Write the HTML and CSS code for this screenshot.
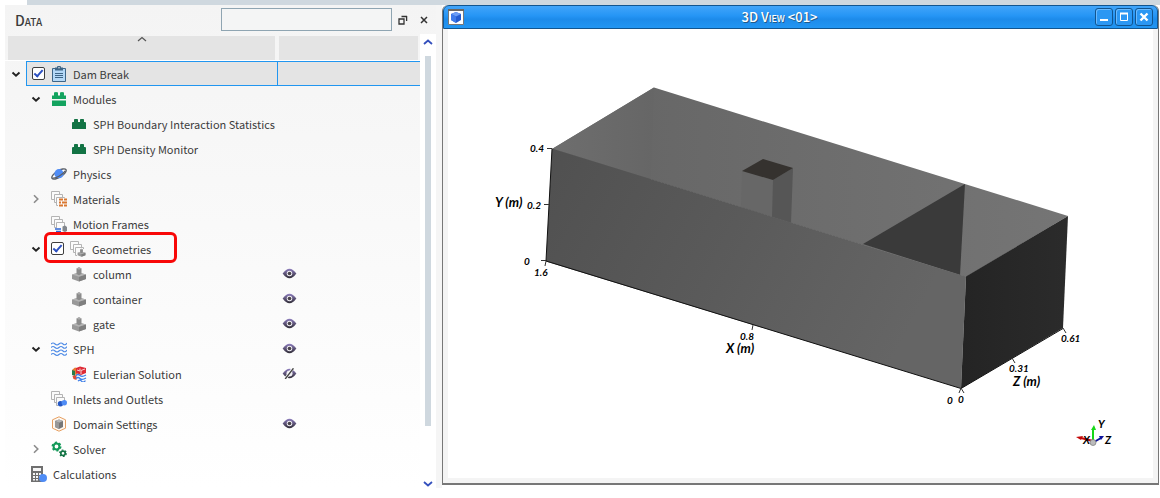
FILE: index.html
```html
<!DOCTYPE html>
<html lang="en">
<head>
<meta charset="utf-8">
<meta name="viewport" content="width=device-width, initial-scale=1">
<title>3D View</title>
<link rel="stylesheet" href="styles.css">
</head>
<body>
<svg class="defs" aria-hidden="true">
  <defs>
    <linearGradient id="eye-fill" x1="0" y1="0" x2="0" y2="1"><stop offset="0" stop-color="#8f7fc0"/><stop offset="1" stop-color="#2e2b33"/></linearGradient>
    <symbol id="down" viewBox="0 0 10 10"><path d="M1.500 3.500 5 6.700l3.500-3.200" fill="none" stroke="#222" stroke-width="1.900"/></symbol>
    <symbol id="right" viewBox="0 0 10 10"><path d="M3 1.200 6.800 5 3 8.800" fill="none" stroke="#8b8b8b" stroke-width="1.600"/></symbol>
    <symbol id="clipboard" viewBox="0 0 16 16"><path d="M1.500 2.500h13v13h-13z" fill="#b4d8f7" stroke="#3d6587"/><path d="M4 1.500h2a2 1.800 0 0 1 4 0h2V4.500H4z" fill="#3d6587"/><circle cx="8" cy="1.800" r=".8" fill="#e4e4e4"/><path d="M4 7.500h8M4 9.500h8M4 11.500h8" stroke="#3d6587"/></symbol>
    <symbol id="module" viewBox="0 0 16 16"><path d="M1 8V4.500h2V1.500q2-1 4 0v3h2v-3q2-1 4 0v3h2V8z" fill="#13a35f"/><path d="M1 9.500h14V15H1z" fill="#13a35f"/></symbol>
    <symbol id="brick" viewBox="0 0 16 16"><path d="M1 13V7q0-1 1-1h1V3.500Q3 3 4 3h2q1 0 1 .5V6h2V3.500Q9 3 10 3h2q1 0 1 .5V6h1q1 0 1 1v6z" fill="#127344"/></symbol>
    <symbol id="planet" viewBox="0 0 16 16"><ellipse cx="8" cy="8" rx="8.200" ry="3.200" transform="rotate(-32 8 8)" fill="#fff" stroke="#5a5f68" stroke-width="1.400"/><circle cx="8" cy="7.700" r="4.600" fill="#4f8cf5"/><path d="M1.500 12c3 .8 10-3 12.700-7.200" fill="none" stroke="#5a5f68" stroke-width="1.300"/></symbol>
    <symbol id="stack" viewBox="0 0 16 16"><g fill="#fbfbfb" stroke="#b4b4b4"><path d="M.5.500h8v8h-8z"/><path d="M3.500 3.500h8v8h-8z"/><path d="M5.500 6.500h8v8h-8z"/></g></symbol>
    <symbol id="materials" viewBox="0 0 16 16"><use href="#stack"/><path d="M7 7h9v9H7z" fill="#fbfbfb"/><path d="M8 7.500h4v2H8zm5 0h3v2h-3zM8 10.500h2v2H8zm3 0h5v2h-5zM8 13.500h4v2H8zm5 0h3v2h-3z" fill="#d9772f"/></symbol>
    <symbol id="motion" viewBox="0 0 16 16"><use href="#stack"/><path d="M4 12h8v4H4z" fill="#fbfbfb"/><path d="M4 13h6M5 15.400h5" stroke="#2c64d4" stroke-width="1.400"/><path d="M11.500 10.500 14 9.500l2 1.500v4l-2 1-2.500-1z" fill="#82868c"/></symbol>
    <symbol id="part" viewBox="0 0 16 16"><path d="m1 8.500 7-2 7 2v4.500l-7 2.500-7-2.500z" fill="#999"/><path d="m8 10.500 7-2v4.500l-7 2.500z" fill="#7f7f7f"/><path d="m1 8.500 7-2 7 2-7 2.300z" fill="#b4b4b4"/><path d="M5.500 2.500 8 1.200l2.500 1.300v5.500L8 9.200 5.500 8z" fill="#8b8b8b"/><path d="M5.500 2.500 8 1.200l2.500 1.300L8 3.700z" fill="#aaa"/></symbol>
    <symbol id="geometries" viewBox="0 0 16 16"><use href="#stack"/><path d="M7 8h9v8H7z" fill="#fbfbfb"/><use href="#part" x="7" y="7" width="9" height="9"/></symbol>
    <symbol id="waves" viewBox="0 0 16 16"><g fill="none" stroke="#4d8ae6" stroke-width="1.100"><path id="wave" d="M0 3q2-2 4 0t4 0 4 0 4-1"/><use href="#wave" y="3.500"/><use href="#wave" y="7"/><use href="#wave" y="10.500"/></g></symbol>
    <symbol id="euler" viewBox="0 0 16 16"><path d="m1 4 3-2.500 3 1v4l-2 3z" fill="#e77a32"/><path d="m1 4 3 1v5l-3-1z" fill="#287c4a"/><path d="m5 2 4-1.500L15 2v5l-5 2-5-2z" fill="#df2a35"/><path d="m6 4 3 1V2.500M10 8V4.500L14 3" fill="none" stroke="#f7d0d0"/><path d="m1.500 10 4-1v5l-3-1z" fill="#e04b35"/><path d="M6 9h10v7H6z" fill="#fbfbfb"/><path d="M5 9.500q2-2 4 0t6-.5M5 12.500q2-2 4 0t6-.5M7 15.200q2-2 3.500 0t4-.5" fill="none" stroke="#3d7ee8" stroke-width="1.200"/></symbol>
    <symbol id="inlets" viewBox="0 0 16 16"><use href="#stack"/><path d="M7 10h9v5H7z" fill="#fbfbfb"/><circle cx="9.500" cy="12.700" r="2.700" fill="#2457c4"/><circle cx="13.300" cy="11.800" r="2.700" fill="#4f8cf5"/></symbol>
    <symbol id="domain" viewBox="0 0 16 16"><path d="m8 .8 6.500 3v8.400L8 15.200l-6.500-3V3.800z" fill="#fff8f1" stroke="#e6a062"/><path d="m8 3.500 4 1.500v6L8 13l-4-2V5z" fill="#777"/><path d="m4 5 4-1.500L12 5 8 6.700z" fill="#b5b5b5"/><path d="M8 6.700V13l-4-2V5z" fill="#989898"/></symbol>
    <symbol id="gears" viewBox="0 0 16 16"><g fill="none"><circle cx="5.500" cy="5.500" r="2.900" stroke="#139a59" stroke-width="2"/><circle cx="5.500" cy="5.500" r="4.300" stroke="#139a59" stroke-width="1.400" stroke-dasharray="2.200 2.300"/><circle cx="12" cy="12.300" r="2.200" stroke="#127344" stroke-width="1.700"/><circle cx="12" cy="12.300" r="3.300" stroke="#127344" stroke-width="1.200" stroke-dasharray="1.700 1.750"/></g></symbol>
    <symbol id="calculator" viewBox="0 0 16 16"><path d="M0 0h12v16H0z" fill="#6f6f6f"/><path d="M2 2h8v3H2zM2 7h2v2H2zm3 0h2v2H5zm3 0h2v2H8zM2 10h2v2H2zm3 0h2v2H5zm3 0h2v2H8zM2 13h2v1.500H2zm3 0h2v1.500H5z" fill="#f6f6f6"/><circle cx="12" cy="12" r="4" fill="#4f8cf5"/></symbol>
    <symbol id="eye" viewBox="0 0 16 12"><path d="M.5 6Q8-4.500 15.500 6 8 16.500 .5 6z" fill="url(#eye-fill)"/><circle cx="8" cy="6" r="3" fill="#f1eff5"/><circle cx="8" cy="6" r="2" fill="#49434a"/></symbol>
    <symbol id="eye-off" viewBox="0 0 16 12"><path d="M.5 6Q8-4.500 15.500 6 8 16.500 .5 6z" fill="url(#eye-fill)"/><circle cx="8" cy="6" r="3.300" fill="#f1eff5"/><path d="M3.300 12 11.800.3" stroke="#fff" stroke-width="3"/><path d="M3.300 12 12.300.3" stroke="#444" stroke-width="1.500"/></symbol>
  </defs>
</svg>

<div class="strip"></div>
<main class="workspace">
  <section class="panel">
    <header class="panel-head">
      <h1 class="panel-title">Data</h1>
      <input class="search" type="text" aria-label="Search">
      <button class="tool" type="button" aria-label="Float"><svg width="10" height="10" viewBox="0 0 10 10" fill="none" stroke="#333" stroke-width="1.300"><path d="M1 4h5v5H1zM3.500 1.500H9M8.600 1v5"/></svg></button>
      <button class="tool" type="button" aria-label="Close"><svg width="8" height="8" viewBox="0 0 8 8"><path d="m1 1 6 6M7 1 1 7" stroke="#333" stroke-width="1.500"/></svg></button>
    </header>
    <div class="panel-body">
      <div class="tree-area">
        <div class="columns">
          <span class="column"><svg class="sort" width="10" height="6" viewBox="0 0 10 6"><path d="m1 5 4-3.500L9 5" fill="none" stroke="#555" stroke-width="1.200"/></svg></span>
          <span class="column"></span>
        </div>
        <ul class="tree">
          <li class="row"><svg class="arrow"><use href="#down"/></svg><div class="node selected"><input class="check" type="checkbox" id="dam" checked><svg class="icon"><use href="#clipboard"/></svg><label for="dam">Dam Break</label></div><div class="state selected"></div></li>
          <li class="row level1"><svg class="arrow"><use href="#down"/></svg><div class="node"><svg class="icon"><use href="#module"/></svg>Modules</div></li>
          <li class="row level2"><span class="arrow"></span><div class="node"><svg class="icon"><use href="#brick"/></svg>SPH Boundary Interaction Statistics</div></li>
          <li class="row level2"><span class="arrow"></span><div class="node"><svg class="icon"><use href="#brick"/></svg>SPH Density Monitor</div></li>
          <li class="row level1"><span class="arrow"></span><div class="node"><svg class="icon"><use href="#planet"/></svg>Physics</div></li>
          <li class="row level1"><svg class="arrow"><use href="#right"/></svg><div class="node"><svg class="icon"><use href="#materials"/></svg>Materials</div></li>
          <li class="row level1"><span class="arrow"></span><div class="node"><svg class="icon"><use href="#motion"/></svg>Motion Frames</div></li>
          <li class="row level1"><svg class="arrow"><use href="#down"/></svg><div class="node marked"><input class="check" type="checkbox" id="geo" checked><svg class="icon"><use href="#geometries"/></svg><label for="geo">Geometries</label></div></li>
          <li class="row level2"><span class="arrow"></span><div class="node"><svg class="icon"><use href="#part"/></svg>column</div><div class="state"><svg class="eye"><use href="#eye"/></svg></div></li>
          <li class="row level2"><span class="arrow"></span><div class="node"><svg class="icon"><use href="#part"/></svg>container</div><div class="state"><svg class="eye"><use href="#eye"/></svg></div></li>
          <li class="row level2"><span class="arrow"></span><div class="node"><svg class="icon"><use href="#part"/></svg>gate</div><div class="state"><svg class="eye"><use href="#eye"/></svg></div></li>
          <li class="row level1"><svg class="arrow"><use href="#down"/></svg><div class="node"><svg class="icon"><use href="#waves"/></svg>SPH</div><div class="state"><svg class="eye"><use href="#eye"/></svg></div></li>
          <li class="row level2"><span class="arrow"></span><div class="node"><svg class="icon"><use href="#euler"/></svg>Eulerian Solution</div><div class="state"><svg class="eye"><use href="#eye-off"/></svg></div></li>
          <li class="row level1"><span class="arrow"></span><div class="node"><svg class="icon"><use href="#inlets"/></svg>Inlets and Outlets</div></li>
          <li class="row level1"><span class="arrow"></span><div class="node"><svg class="icon"><use href="#domain"/></svg>Domain Settings</div><div class="state"><svg class="eye"><use href="#eye"/></svg></div></li>
          <li class="row level1"><svg class="arrow"><use href="#right"/></svg><div class="node"><svg class="icon"><use href="#gears"/></svg>Solver</div></li>
          <li class="row"><span class="arrow"></span><div class="node"><svg class="icon"><use href="#calculator"/></svg>Calculations</div></li>
        </ul>
      </div>
      <div class="scrollbar">
        <svg width="10" height="6" viewBox="0 0 10 6"><path d="m1 5 4-3.500L9 5" fill="none" stroke="#3450bd" stroke-width="1.800"/></svg>
        <div class="thumb"></div>
        <svg width="10" height="6" viewBox="0 0 10 6"><path d="m1 1 4 3.500L9 1" fill="none" stroke="#3450bd" stroke-width="1.800"/></svg>
      </div>
    </div>
  </section>

  <section class="window">
    <header class="titlebar">
      <svg class="app-icon" width="16" height="16" viewBox="0 0 16 16"><path d="M.5.500h15v15H.5z" fill="#fff" stroke="#777"/><path d="M0 0h16v2H0z" fill="#6a6662"/><path d="m8 3 5 2v6l-5 3-5-3V5z" fill="#245cd0"/><path d="m3 5 5-2 5 2-5 2.500z" fill="#6b9df5"/><path d="m3 5 5 2.500V14l-5-3z" fill="#3f7bea"/></svg>
      <h2 class="window-title">3D View &lt;01&gt;</h2>
      <div class="controls">
        <button class="control" type="button" aria-label="Minimize"><svg width="10" height="10" viewBox="0 0 10 10"><path d="M1 8h8" stroke="#fff" stroke-width="2"/></svg></button>
        <button class="control" type="button" aria-label="Maximize"><svg width="10" height="10" viewBox="0 0 10 10"><path d="M1.500 1.500h7v7h-7z" fill="none" stroke="#fff"/><path d="M1 1.500h8" stroke="#fff" stroke-width="2"/></svg></button>
        <button class="control" type="button" aria-label="Close view"><svg width="10" height="10" viewBox="0 0 10 10"><path d="m1.500 1.500 7 7m0-7-7 7" stroke="#fff" stroke-width="2.400"/></svg></button>
      </div>
    </header>
    <div class="viewport">
      <svg class="scene" viewBox="448 29 705 449" role="img" aria-label="Tank with column and gate">
        <defs>
          <linearGradient id="front" x1="0" x2="1" y1="0" y2=".3"><stop offset="0" stop-color="#505050"/><stop offset=".5" stop-color="#5a5a5a"/><stop offset="1" stop-color="#656565"/></linearGradient>
          <linearGradient id="back"><stop offset="0" stop-color="#646464"/><stop offset="1" stop-color="#757575"/></linearGradient>
          <linearGradient id="left-wall"><stop offset="0" stop-color="#6e6e6e"/><stop offset="1" stop-color="#666"/></linearGradient>
          <linearGradient id="side"><stop offset="0" stop-color="#242424"/><stop offset="1" stop-color="#2b2b2b"/></linearGradient>
        </defs>
        <path d="M654 87.500 1068 216 966 277 552 149z" fill="url(#back)"/>
        <path d="M654 87.500 552 149l99 31z" fill="url(#left-wall)"/>
        <path d="m742 171 31 9v37l-32-10z" fill="#676767"/>
        <path d="m773 180 20-12-2 55-19-6z" fill="#565656"/>
        <path d="m763 159 30 9-20 12-31-9z" fill="#35322f"/>
        <path d="m965 184-5 91-97-31z" fill="#3a3a3a"/>
        <path d="m552 148.500 414 128-5 112-415-127z" fill="url(#front)"/>
        <path d="m966 276.500 102-60.500-5 112-102 60.500z" fill="url(#side)"/>
        <path d="m552 149-6 112 415 127.500 102-60" fill="none" stroke="#111"/>
        <path d="M547 148.500h5M544 204.500h5M541 260.500h5M546 261l-1 5M753 325l-1 5M961 388l-2 5M961 388l3 5M1012 358l3 5M1063 328l3 5" fill="none" stroke="#333"/>
        <g class="tick">
          <text x="530" y="152">0.4</text><text x="527" y="209">0.2</text><text x="524" y="265">0</text><text x="534" y="276">1.6</text>
          <text x="740" y="340">0.8</text><text x="947" y="404">0</text><text x="958" y="403">0</text><text x="1009" y="372">0.31</text><text x="1061" y="342">0.61</text>
        </g>
        <g class="axis">
          <text x="495" y="207">Y (m)</text><text x="726" y="353">X (m)</text><text x="1013" y="386">Z (m)</text>
        </g>
        <path d="m1093 441-12-3" stroke="#c40808" stroke-width="2"/><path d="m1076 437 7-1-2 4z" fill="#c40808"/>
        <path d="M1093 441v-12" stroke="#17d717" stroke-width="2"/><path d="m1094 425-3 5h5z" fill="#17d717"/>
        <path d="m1094 442 7-4" stroke="#0c129c" stroke-width="2"/><path d="m1104 436-5 0 2 4z" fill="#0c129c"/>
        <circle cx="1093" cy="442.500" r="3" fill="#bbb" stroke="#777" stroke-width=".7"/>
        <g class="triad"><text x="1083" y="444">X</text><text x="1098" y="428">Y</text><text x="1105" y="444">Z</text></g>
      </svg>
    </div>
  </section>
</main>
</body>
</html>
```

FILE: styles.css
```css
*, *::before, *::after { box-sizing: border-box; }
body {
  margin: 0;
  min-height: 100vh;
  display: flex;
  flex-direction: column;
  background: #fff;
  color: #3c3c3c;
  font: 11px/24px "Noto Sans CJK SC", "Noto Sans", sans-serif;
}
.defs { position: absolute; width: 0; height: 0; }
.strip { height: 5px; margin-left: 27px; background: #cfd8df; }
.workspace { flex: 1; display: flex; padding: 0 1px 11px 5px; }

.panel {
  flex: 0 0 437px;
  display: flex;
  flex-direction: column;
  background: linear-gradient(#f4f4f4, #fff);
  border-right: 6px solid #f5f5f5;
}
.panel-head { display: flex; align-items: center; height: 29px; padding: 0 2px 0 10px; }
.panel-title { flex: 1; margin: 0; font-size: 14px; font-weight: 500; font-variant: small-caps; line-height: 28px; }
.search { width: 171px; height: 23px; padding: 0 4px; border: 1px solid #8fa5b2; background: #f4f5f5; font: inherit; }
.tool { width: 21px; height: 20px; padding: 0; border: 0; background: none; display: grid; place-items: center; }
.panel-body { flex: 1; display: flex; }
.tree-area { flex: 1; min-width: 0; }
.columns { display: grid; grid-template-columns: 1fr 139px; gap: 4px; height: 27px; padding: 2px 2px 0 3px; border-bottom: 1px solid #fff; }
.column { background: #e4e4e4; text-align: center; line-height: 0; }
.tree { margin: 0; padding: 0; list-style: none; }
.row { display: flex; align-items: center; height: 25px; padding-left: 1px; }
.level1 { padding-left: 21px; }
.level2 { padding-left: 41px; }
.arrow { flex: none; width: 20px; height: 10px; }
.node { flex: 1; display: flex; align-items: center; gap: 6px; height: 25px; padding-left: 5px; white-space: nowrap; position: relative; }
.selected { border: 1px solid #2196f0; border-right: 0; background: #e4e4e4; }
.icon { flex: none; width: 16px; height: 16px; }
.state { flex: none; width: 143px; height: 25px; padding-left: 5px; display: flex; align-items: center; }
.eye { width: 15px; height: 11px; }
.check {
  appearance: none;
  flex: none;
  width: 13px;
  height: 13px;
  margin: 0;
  border: 1px solid #3e3e3e;
  border-radius: 2px;
  background: #fff;
}
.check:checked::before {
  content: "";
  display: block;
  width: 9px;
  height: 5px;
  margin: 2px 1px;
  border: solid #2c50c0;
  border-width: 0 0 2px 2px;
  transform: rotate(-48deg);
}
.marked::after {
  content: "";
  position: absolute;
  left: -2px;
  top: -4px;
  width: 133px;
  height: 31px;
  border: 3px solid #f80808;
  border-radius: 6px;
  pointer-events: none;
}
.scrollbar { width: 16px; display: flex; flex-direction: column; align-items: center; gap: 11px; padding: 5px 0 1px; background: #fff; }
.thumb { width: 6px; height: 370px; margin-bottom: auto; background: #cfd8df; }

.window {
  flex: 1;
  min-width: 0;
  margin-bottom: 3px;
  display: flex;
  flex-direction: column;
  border: solid #777;
  border-width: 0 1px 2px;
  border-radius: 6px 6px 0 0;
}
.titlebar {
  flex: none;
  display: flex;
  align-items: center;
  height: 24px;
  padding: 0 4px;
  border: 1px solid #12558f;
  border-radius: 6px 6px 0 0;
  background: linear-gradient(#42a5fa, #2595f5 45%, #1d8bea 60%, #2196f3);
}
.window-title { flex: 1; margin: 0; text-align: center; color: #fff; font-size: 13px; font-weight: 500; font-variant: small-caps; line-height: 20px; text-shadow: 1px 1px 0 #245b88; }
.controls { display: flex; gap: 2px; }
.control { width: 18px; height: 18px; padding: 0; border: 1px solid #12558f; border-radius: 3px; background: #2b97f3; display: grid; place-items: center; box-shadow: inset 1px 1px 0 #6abaff; }
.viewport { flex: 1; min-height: 0; display: flex; border: solid #f4f4f4; border-width: 0 5px 5px; background: #fff; }
.scene { display: block; width: 100%; height: auto; }
.tick, .axis, .triad { font-family: Lato, sans-serif; font-style: italic; font-weight: 700; fill: #000; }
.tick { font-size: 10px; }
.axis { font-size: 13px; }
.triad { font-size: 11px; }
```
